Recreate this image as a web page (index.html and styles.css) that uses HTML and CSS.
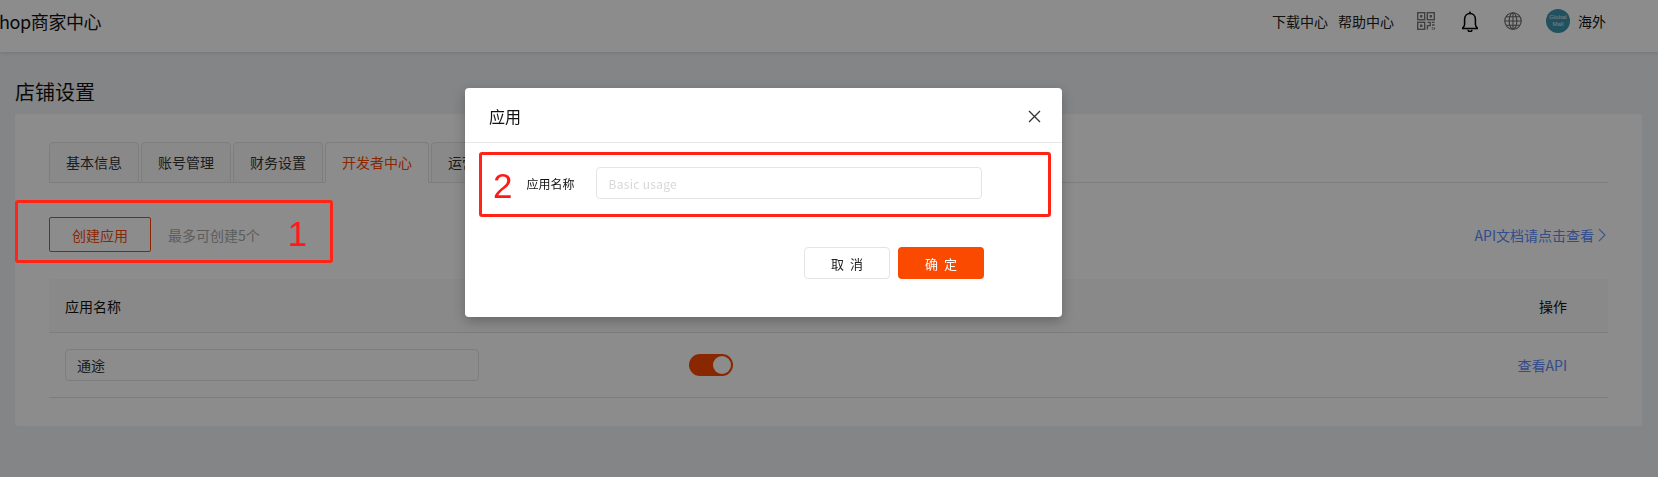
FILE: index.html
```html
<!DOCTYPE html>
<html lang="zh-CN">
<head>
    <meta charset="UTF-8">
    <meta name="viewport" content="width=device-width, initial-scale=1.0">
    <title>店铺设置</title>
    <link rel="stylesheet" href="styles.css">
</head>
<body>
    <header class="topbar">
        <div class="logo">hop商家中心</div>
        <nav class="topnav">
            <a class="nav-link">下载中心</a>
            <a class="nav-link">帮助中心</a>
            <svg class="icon-qr" width="18" height="18" viewBox="0 0 18 18" fill="none" stroke="#777" stroke-width="1.400">
                <rect x=".7" y=".7" width="7" height="7"/>
                <rect x="10.300" y=".7" width="7" height="7"/>
                <rect x=".7" y="10.300" width="7" height="7"/>
                <path d="M3 3h2.400v2.400H3zM12.600 3H15v2.400h-2.400zM3 12.600h2.400V15H3z" fill="#777" stroke="none"/>
                <path d="M10.400 10.400h2.800v3.200h-2.800v3.800M14.800 10.400h2.800M15 13h2.600M14.800 15.600h.9M14.800 17.400h.9M17.300 15.400v2.200"/>
            </svg>
            <svg class="icon-bell" width="16" height="21" viewBox="1 0 14 18.600" fill="none" stroke="#000" stroke-width="1.350">
                <path d="M8 2.200c-3 0-4.800 2.300-4.800 5.300v4.500c0 1.300-.7 2.400-2.200 3.500h14c-1.500-1.100-2.200-2.200-2.200-3.500V7.500c0-3-1.800-5.300-4.800-5.300z"/>
                <path d="M8 .4v1.800M6.300 16.500c0 2.200 3.400 2.200 3.400 0"/>
            </svg>
            <svg class="icon-globe" width="18" height="18" viewBox="0 0 18 18" fill="none" stroke="#666" stroke-width="1.100">
                <circle cx="9" cy="9" r="8.200"/>
                <ellipse cx="9" cy="9" rx="3.800" ry="8.200"/>
                <path d="M9 .8v16.400M.8 9h16.400M2 4.800h14M2 13.200h14"/>
            </svg>
            <div class="avatar"><span>Global</span><span>Mall</span></div>
            <span class="user-name">海外</span>
        </nav>
    </header>

    <main class="content">
        <h1 class="page-title">店铺设置</h1>
        <section class="card">
            <div class="tabs">
                <div class="tab">基本信息</div>
                <div class="tab">账号管理</div>
                <div class="tab">财务设置</div>
                <div class="tab active">开发者中心</div>
                <div class="tab">运营设置</div>
            </div>

            <div class="toolbar">
                <div class="toolbar-left">
                    <button class="btn-create">创建应用</button>
                    <span class="hint">最多可创建5个</span>
                </div>
                <a class="doc-link">API文档请点击查看
                    <svg width="8" height="14" viewBox="0 0 8 14" fill="none" stroke="#6f9bff" stroke-width="1.100"><path d="M1 1l6 6-6 6"/></svg>
                </a>
            </div>

            <div class="table-head">
                <span>应用名称</span>
                <span>操作</span>
            </div>
            <div class="table-row">
                <div class="name-box">通途</div>
                <div class="switch"><i class="knob"></i></div>
                <a class="api-link">查看API</a>
            </div>
        </section>
    </main>

    <div class="mask"></div>

    <!-- 红框标注 -->
    <div class="mark-one"><span class="mark-num">1</span></div>

    <div class="modal">
        <div class="modal-head">
            <span>应用</span>
            <svg width="13" height="13" viewBox="0 0 13 13" fill="none" stroke="#333" stroke-width="1.300"><path d="M1 1l11 11M12 1L1 12"/></svg>
        </div>
        <div class="mark-two">
            <span class="mark-num">2</span>
            <label class="field-label">应用名称</label>
            <input class="field-input" type="text" placeholder="Basic usage">
        </div>
        <div class="modal-foot">
            <button class="btn-cancel">取 消</button>
            <button class="btn-ok">确 定</button>
        </div>
    </div>
</body>
</html>
```

FILE: styles.css
```css
* {
    box-sizing: border-box;
}
html, body {
    height: 100%;
}
body {
    margin: 0;
    height: 477px;
    overflow: hidden;
    background-color: #f0f2f5;
    color: #222;
    font-family: "Noto Sans CJK SC", sans-serif;
    font-size: 14px;
}
.topbar {
    display: flex;
    align-items: center;
    justify-content: space-between;
    height: 52px;
    padding: 0 52px 10px 0;
    background-color: #fff;
    box-shadow: 0 1px 4px rgba(0,0,0,0.12);
}
.logo {
    margin-left: -1px;
    font-size: 18px;
    letter-spacing: -0.4px;
    line-height: 24px;
    color: #111;
}
.topnav {
    display: flex;
    align-items: center;
}
.nav-link {
    margin-right: 10px;
    line-height: 20px;
    color: #222;
}
.icon-qr {
    margin-left: 13px;
}
.icon-bell {
    margin-left: 27px;
}
.icon-globe {
    margin-left: 26px;
}
.avatar {
    display: flex;
    flex-direction: column;
    align-items: center;
    justify-content: center;
    width: 24px;
    height: 24px;
    margin-left: 24px;
    border-radius: 50%;
    background-color: #3d94ad;
    color: #e4e4e4;
    font-family: "Liberation Sans", sans-serif;
    font-size: 6px;
    line-height: 7px;
}
.user-name {
    margin-left: 8px;
    color: #111;
}
.content {
    padding: 0 16px 0 15px;
}
.page-title {
    margin: 0;
    padding-top: 26px;
    height: 62px;
    font-size: 20px;
    font-weight: normal;
    line-height: 28px;
    color: #111;
}
.card {
    height: 312px;
    padding: 28px 34px 0;
    background-color: #fff;
    border-radius: 2px;
}
.tabs {
    display: flex;
    gap: 2px;
    height: 41px;
    border-bottom: 1px solid #e4e4e4;
}
.tab {
    height: 41px;
    padding: 0 16px;
    border: 1px solid #e4e4e4;
    border-radius: 4px 4px 0 0;
    background-color: #fafafa;
    line-height: 38px;
    color: #333;
}
.tab.active {
    background-color: #fff;
    border-bottom-color: #fff;
    color: #f94a00;
}
.toolbar {
    display: flex;
    align-items: center;
    justify-content: space-between;
    margin-top: 34px;
    height: 35px;
}
.toolbar-left {
    display: flex;
    align-items: center;
}
.btn-create {
    width: 102px;
    height: 35px;
    padding: 0;
    border: 1px solid #f94a00;
    border-radius: 2px;
    background-color: #fff;
    color: #f94a00;
    font-family: inherit;
    font-size: 14px;
}
.hint {
    margin-left: 17px;
    color: #aaa;
}
.doc-link {
    display: flex;
    align-items: center;
    gap: 4px;
    margin-right: 2px;
    color: #5b8cff;
}
.table-head {
    display: flex;
    align-items: center;
    justify-content: space-between;
    height: 54px;
    margin-top: 27px;
    padding: 0 41px 0 16px;
    background-color: #fafafa;
    border-bottom: 1px solid #e4e4e4;
    color: #111;
}
.table-row {
    display: flex;
    align-items: center;
    height: 65px;
    padding: 0 41px 0 16px;
    border-bottom: 1px solid #e4e4e4;
}
.name-box {
    width: 414px;
    height: 32px;
    padding: 0 11px;
    border: 1px solid #e4e4e4;
    border-radius: 4px;
    line-height: 30px;
    color: #333;
}
.switch {
    position: relative;
    width: 44px;
    height: 22px;
    margin-left: 210px;
    border-radius: 11px;
    background-color: #f94a00;
}
.knob {
    position: absolute;
    top: 2px;
    right: 2px;
    width: 18px;
    height: 18px;
    border-radius: 50%;
    background-color: #fff;
}
.api-link {
    margin-left: auto;
    color: #5b8cff;
}
.mask {
    position: fixed;
    top: 0;
    left: 0;
    right: 0;
    bottom: 0;
    background-color: rgba(0,0,0,0.45);
}
.mark-one {
    position: absolute;
    top: 200px;
    left: 15px;
    display: flex;
    align-items: center;
    justify-content: flex-end;
    width: 318px;
    height: 63px;
    padding: 4px 23px 0 0;
    border: 3px solid #ff2416;
    border-radius: 3px;
}
.mark-num {
    font-family: "Liberation Sans", sans-serif;
    font-size: 35px;
    line-height: 40px;
    color: #ff1a14;
}
.modal {
    position: absolute;
    top: 88px;
    left: 465px;
    width: 597px;
    height: 229px;
    background-color: #fff;
    border-radius: 4px;
    box-shadow: 0 4px 12px rgba(0,0,0,0.25);
}
.modal-head {
    display: flex;
    align-items: center;
    justify-content: space-between;
    height: 55px;
    padding: 2px 21px 0 24px;
    border-bottom: 1px solid #e8e8e8;
    font-size: 16px;
    color: #111;
}
.mark-two {
    display: flex;
    align-items: center;
    height: 65px;
    margin: 9px 11px 0 14px;
    padding: 0 0 3px 11px;
    border: 3px solid #ff2416;
    border-radius: 3px;
}
.mark-two .mark-num {
    margin-top: 6px;
}
.field-label {
    margin-left: 14px;
    font-size: 12px;
    color: #111;
}
.field-input {
    width: 386px;
    height: 32px;
    margin-left: 22px;
    padding: 0 11px;
    border: 1px solid #e4e4e4;
    border-radius: 4px;
    font-family: inherit;
    font-size: 12px;
    letter-spacing: 0.3px;
}
.field-input::placeholder {
    color: #d8d8d8;
}
.modal-foot {
    display: flex;
    justify-content: flex-end;
    gap: 8px;
    margin: 30px 78px 0 0;
}
.modal-foot button {
    width: 86px;
    height: 32px;
    padding: 0;
    border-radius: 4px;
    font-family: inherit;
    font-size: 13px;
    word-spacing: 3px;
}
.btn-cancel {
    border: 1px solid #e4e4e4;
    background-color: #fff;
    color: #222;
}
.btn-ok {
    border: none;
    background-color: #f94a00;
    color: #fff;
}
```
